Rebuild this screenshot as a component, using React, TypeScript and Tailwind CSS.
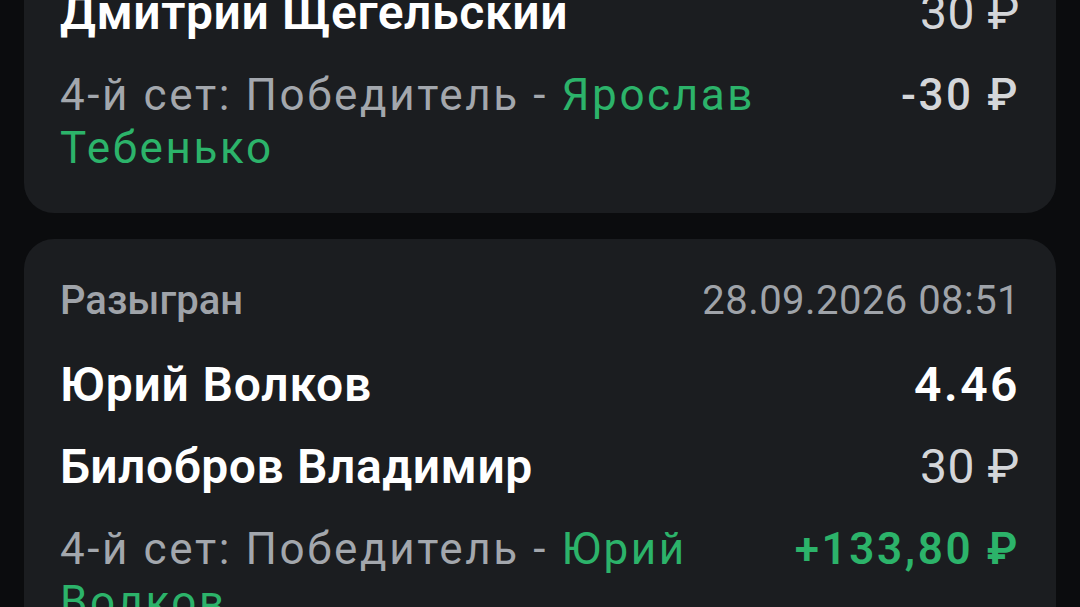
import React from 'react';

interface Bet {
  id: number;
  status: string;
  date: string;
  player: string;
  coef: string;
  opponent: string;
  stake: string;
  market: string;
  pick: string;
  result: string;
  won: boolean;
}

const bets: Bet[] = [
  {
    id: 1,
    status: 'Разыгран',
    date: '28.09.2026 09:14',
    player: 'Ярослав Тебенько',
    coef: '2.10',
    opponent: 'Дмитрий Щегельский',
    stake: '30 ₽',
    market: '4-й сет: Победитель - ',
    pick: 'Ярослав Тебенько',
    result: '-30 ₽',
    won: false,
  },
  {
    id: 2,
    status: 'Разыгран',
    date: '28.09.2026 08:51',
    player: 'Юрий Волков',
    coef: '4.46',
    opponent: 'Билобров Владимир',
    stake: '30 ₽',
    market: '4-й сет: Победитель - ',
    pick: 'Юрий Волков',
    result: '+133,80 ₽',
    won: true,
  },
];

const BetCard: React.FC<{ bet: Bet }> = ({ bet }) => {
  return (
    <div className="bg-[#1b1d20] rounded-[30px] px-[36px] pt-[38px] pb-[38px]">
      <div className="flex items-center justify-between text-[40px] leading-[48px] text-[#9fa3a9]">
        <span className="font-medium">{bet.status}</span>
        <span className="tracking-[0.45px]">{bet.date}</span>
      </div>

      <div className="mt-[32px] flex items-center justify-between text-[48px] leading-[56px] font-semibold text-white">
        <span className="tracking-[0.8px]">{bet.player}</span>
        <span className="tracking-[2.5px]">{bet.coef}</span>
      </div>

      <div className="mt-[26px] flex items-center justify-between text-[48px] leading-[56px] tracking-[0.6px]">
        <span className="font-semibold text-white">{bet.opponent}</span>
        <span className="text-[#d4d6d9]">{bet.stake}</span>
      </div>

      <div className="mt-[28px] flex items-start justify-between gap-[36px] text-[44px] leading-[53px] tracking-[2.6px]">
        <p className="text-[#a3a7ad]">
          {bet.market}
          <span className="text-[#2cb36a]">{bet.pick}</span>
        </p>
        <span
          className={
            bet.won
              ? 'shrink-0 font-semibold text-[#2cb36a]'
              : 'shrink-0 font-medium text-[#d4d6d9]'
          }
        >
          {bet.result}
        </span>
      </div>
    </div>
  );
};

export default function App() {
  return (
    <div className="w-[1080px] h-[607px] overflow-hidden bg-[#0b0c0e] font-['Roboto',sans-serif]">
      <div className="-mt-[215px] px-[24px] flex flex-col gap-[26px]">
        {bets.map(bet => (
          <BetCard key={bet.id} bet={bet} />
        ))}
      </div>
    </div>
  );
}
